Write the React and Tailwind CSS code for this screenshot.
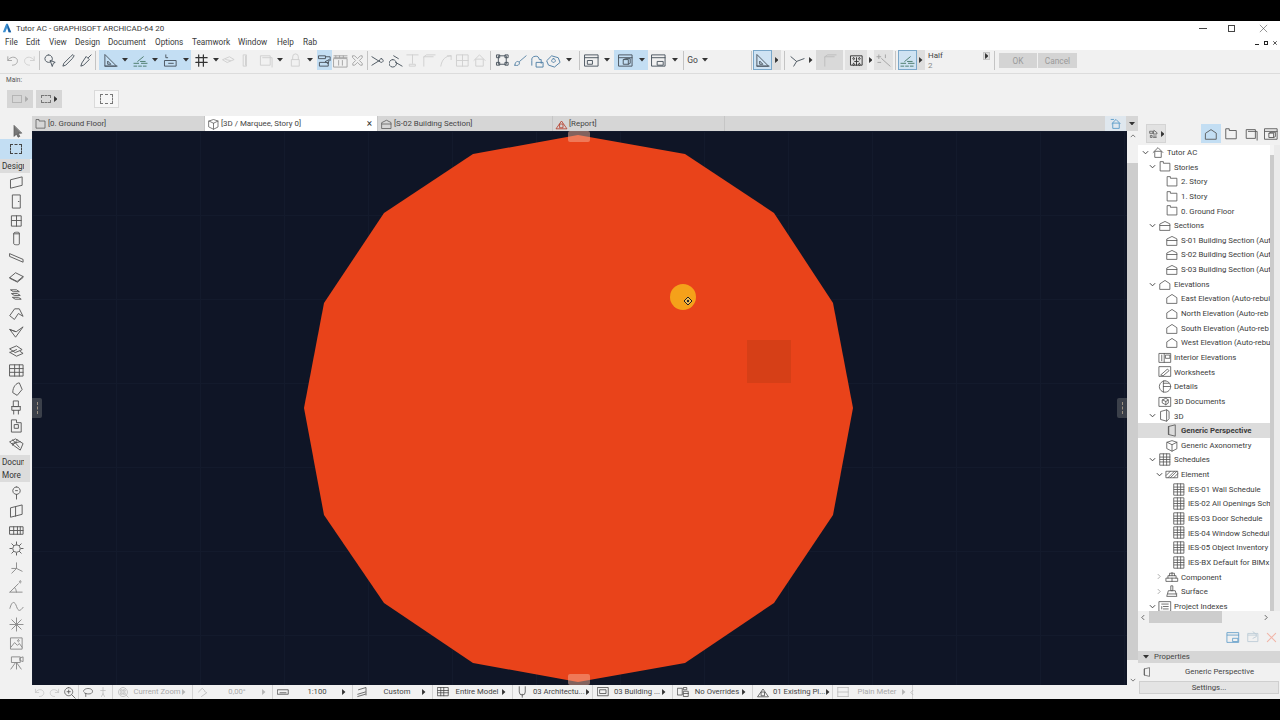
import React from "react";

const P = {
  undo: "M3 4v4h4M3 8c2-4 8-5 10-1 1 3-1 6-5 6",
  redo: "M13 4v4H9M13 8c-2-4-8-5-10-1-1 3 1 6 5 6",
  pick: "M6 2a4 4 0 1 0 .01 0M8 8l5 2-2 1-1 3z",
  drop: "M13 2l1 1-2 3-7 7-3 1 1-3 7-7z",
  syr: "M14 2l-3 3M9 4l3 3-6 6-3 1 1-3z",
  tri: "M2 2v12h12zM5 9v3h3zM2 14h13",
  snap: "M1 11h5M9 11h6M1 14h3M6 14h3M11 14h3M5 9l6-5M8 9h5",
  loc: "M3 2v3h2M2 8h12v6H2zM6 11h5",
  grid: "M5 2v12M10 2v12M2 5h12M2 10h12",
  ghost: "M2 7l7-3 5 3-7 3zM5 7l5 1",
  ghost2: "M6 2h3v12H6zM8 3v10",
  sq: "M3 3h10v10H3zM5 5h10v10",
  lock: "M5 7V4a3 3 0 0 1 6 0v3M4 7h8v7H4z",
  link: "M2 3h7v3H2zM9 4h5v4M3 10h9v4H3zM9 9l4-2-1 4z",
  dim: "M1 3h14M1 5h14M3 3v2M7 3v2M11 3v2M1 6h14v9H1zM6 8v5M10 8v5",
  xx: "M3 3h2l3 3 3-3h2v2l-3 3 3 3v2h-2l-3-3-3 3H3v-2l3-3-3-3z",
  sci: "M1 4l8 5M1 13l8-5M11 6a2 2 0 1 0 .01 0",
  mag: "M4 7a4 4 0 1 0 .01 0M7 10l7 4M5 3l5 3",
  tee: "M2 2h12M8 2v9M5 12h6v2H5z",
  cor: "M3 14V4h10M3 4l3-2h9",
  cur: "M3 14C4 7 8 3 14 3M10 3h4v4",
  box: "M2 2h12v12H2zM2 8h12M8 2v12",
  home: "M2 8l6-6 6 6M4 7v7h8V7z",
  nodes: "M4 3h8v9H4zM2 2h3v3H2zM11 2h3v3h-3zM2 10h3v3H2zM11 10h3v3h-3z",
  brush: "M14 3L7 9M2 13c3 1 5 0 5-3L5 9c-2 0-3 2-3 4z",
  cloud: "M3 13V8a4 4 0 0 1 8-1h2v4M8 10h7v5H8z",
  gem: "M1 8l5-5 7 2 2 5-6 5-6-2zM8 6a2 2 0 1 0 .01 0",
  w1: "M1 2h14v12H1zM1 5h14M4 8h5v4H4z",
  w2: "M1 2h14v12H1zM1 5h14M6 7h5v5H6zM6 7l2-1h5v5l-2 1",
  w3: "M1 2h14v12H1zM1 5h14M7 9h6v4H7z",
  yy: "M1 4l6 5-3 5M7 9l8-3",
  mv: "M2 3h12v10H2zM5 5a1 1 0 1 0 .01 0M11 5a1 1 0 1 0 .01 0M5 11a1 1 0 1 0 .01 0M11 11a1 1 0 1 0 .01 0M8 5v8M6 9h4",
  wand: "M15 14L6 6M3 2v4M1 4h4M10 2v3M2 10h3",
  arrow: "M5 1v13l3-3 2 4 2-1-2-4h4z",
  wall: "M2 5l12-3v9L2 14z",
  door: "M4 1h8v14H4zM10 8h.6",
  win: "M3 3h10v11H3zM3 8h10M8 3v11",
  col: "M5 2c0-1 6-1 6 0v12c0 1-6 1-6 0zM5 3h6",
  beam: "M1 4l14 6v3L1 7z",
  slab: "M1 9l6-5 8 4-6 5zM1 9v1l8 4 6-5V8",
  stair: "M2 3h6l3 2H5zM3 7h6l3 2H6zM4 11h6l3 2H7z",
  roof: "M1 10l5-7h5l4 8-5-3-4 6z",
  shell: "M1 5l6 8L15 2 8 7zM1 5l6 2",
  lay: "M1 5l7-3 6 4-7 3zM1 9l7-3M1 9l7 4 7-3-3-2",
  curt: "M1 3h14v12H1zM1 7h14M1 11h14M6 3v12M11 3v12",
  morph: "M4 12C4 6 8 2 11 2l3 7-5 6z",
  chair: "M5 1h5v6H5zM3 7h9M3 7v4h9V7M5 11v4M10 11v4",
  zone: "M3 2h5v3h5v10H3zM6 7h4v4H6z",
  mesh: "M1 5l6-3 8 5-3 7-7-5zM4 3l7 8M9 3l-5 6M3 7l9-2",
  mark: "M8 2a4 4 0 1 0 .01 0M8 10v5M7 6h2",
  elev: "M2 4l12-3v10L2 14zM7 3v10",
  det: "M1 4h14v8H1zM1 8h14M5 4v8M9 4v8M12 4v8",
  sun: "M8 4a4 4 0 1 0 .01 0M1 8h2M13 8h2M3 3l2 2M11 11l2 2M13 3l-2 2M5 11l-2 2M8 1v2M8 13v2",
  ax: "M3 14l5-5V3M8 9l6 3M3 9l5 0",
  ang: "M1 14l9-9M1 14h13M8 14a8 8 0 0 0-2-5M12 2a1 1 0 1 0 .01 0",
  wave: "M1 11c2-8 5-8 7-2s4 5 7 1",
  star: "M8 1v14M1 8h14M3 3l10 10M13 3L3 13",
  pic: "M2 2h12v12H2zM2 12l4-5 3 3 2-2 3 4M10 4a1 1 0 1 0 .01 0",
  cam: "M3 2h9v6H3zM12 3l3-1v5l-3-1zM7 8l-5 7M8 8l5 7M8 8v7",
  story: "M2 13V2h4v2h8v9z",
  section: "M2 6l6-3 6 3v8H2zM2 8h12",
  elevh: "M2 7l6-4 6 4v7H2z",
  intel: "M1 3h14v11H1zM7 3v11M9 5h5v4H9zM4 5v7",
  sheet: "M1 2h14v12H1zM3 12l8-7 2 2-7 6z",
  dets: "M8 1a7 7 0 1 0 .01 0M6 1v14M6 8h9M6 4h7",
  docs: "M1 3h14v11H1zM5 6l4-2 3 2v4l-3 2-4-2zM9 8v4M5 6l4 2 3-2",
  d3: "M3 3l7-2 3 2v9l-3 3-7-2zM10 1v14",
  persp: "M4 3l8-2v14l-8-2zM4 3v10",
  axon: "M2 4l6-2 6 2v8l-6 3-6-3zM2 4l6 3 6-3M8 7v8",
  sched: "M2 1h12v14H2zM2 5h12M2 8h12M2 11h12M6 1v14M10 1v14",
  hat: "M1 4h14v8H1zM3 12l8-8M6 12l8-8M1 9l5-5M10 12l5-5",
  bricks: "M1 14h14v-4H1zM8 10v4M3 10V7h10v3M8 7V3M5 7V4h6v3",
  surf: "M7 1h2v6H7zM4 7h8l2 7H2zM3 11h11",
  index: "M1 2h14v12H1zM4 5h8M6 8h6M6 11h6M4 8v3",
  proj: "M3 8l5-5 5 5M4 8v6h8V8zM2 3h3",
  tabs: "M3 4h4v3H3zM9 3l4 3v2H8zM4 10h2v3H4zM8 11h4M8 13h4",
  winb: "M1 2h14v12H1zM1 5h14M8 9h6v4H8z",
  addv: "M2 3h12v10H2zM2 5h10M8 1l4 3v3l-4 2",
  close: "M2 2l12 12M14 2L2 14",
  ruler: "M1 5h14v6H1zM4 9h2M7 9h2M10 9h2",
  layer: "M1 11l10-3M1 14l10-3M2 5l10-3v10",
  model: "M1 2h14v11H1zM1 6h14M5 2v11M9 2v11M1 9h14",
  fork: "M3 1v7a4 4 0 0 0 8 0V1M7 11v4",
  secb: "M1 2h14v11H1zM4 5h8v5H4z",
  over: "M1 3h6v9H1zM9 2h4v3H9zM9 7h6v7H9zM9 10h6",
  reno: "M1 14l7-10 7 10zM6 8h4v5H6z",
  plain: "M1 2h14M1 14h14M1 8h14M1 2v12M15 2v12",
  gl: "M8 2a6 6 0 1 0 .01 0M5 5h2v2H5zM9 9h2v2H9zM9 5h2v2H9zM5 9h2v2H5zM12 12l3 3",
  zm: "M7 2a5 5 0 1 0 .01 0M7 5v4M5 7h4M11 11l4 4",
  lasso: "M2 7c0-5 12-5 12 0s-9 4-11 2M5 10v4",
  walk: "M8 2v2M5 6h6M8 5v5M6 14l2-4 2 4",
  ang2: "M2 8l5-5 3 3M6 14l7-5-3-2",
};

function I({ n, cls = "w-[15px] h-[15px] text-[#4a4a4a]", sw = 1, fill = "none" }) {
  return (
    <svg viewBox="0 0 16 16" className={cls + " shrink-0"} fill={fill} stroke="currentColor" strokeWidth={sw} strokeLinejoin="round" strokeLinecap="round">
      <path d={P[n]} />
    </svg>
  );
}

const Dn = () => (
  <svg viewBox="0 0 7 4" className="w-[6px] h-[3.5px] text-[#333] shrink-0" fill="currentColor"><path d="M0 0h7L3.5 4z" /></svg>
);
const Rt = ({ cls = "text-[#333]" }) => (
  <svg viewBox="0 0 4 7" className={"w-[3.5px] h-[6px] shrink-0 " + cls} fill="currentColor"><path d="M0 0l4 3.5L0 7z" /></svg>
);
const Sep = ({ w }) => (
  <div className={w + " h-[20px] flex justify-center items-center shrink-0"}><div className="w-px h-[19px] bg-[#c4c4c4]" /></div>
);
const C = ({ w, children, cls = "" }) => (
  <div className={w + " h-[20px] flex items-center justify-center shrink-0 " + cls}>{children}</div>
);
const faded = "w-[15px] h-[15px] text-[#cfcfcf]";
const mid = "w-[15px] h-[15px] text-[#a3a3a3]";
const dark = "w-[15px] h-[15px] text-[#4a545e]";

function Toolbar() {
  return (
    <div className="h-[24px] flex items-start bg-[#f1f1f1] border-b border-[#dcdcdc] pl-[4px]">
      <C w="w-[16px]"><I n="undo" cls={mid} /></C>
      <C w="w-[18px]"><I n="redo" cls={faded} /></C>
      <Sep w="w-[3px]" />
      <C w="w-[18px]"><I n="pick" cls={dark} /></C>
      <C w="w-[18px]"><I n="drop" cls={dark} /></C>
      <C w="w-[16px]"><I n="syr" cls={dark} /></C>
      <Sep w="w-[4px]" />
      <div className="w-[2px] shrink-0" />
      <div className="flex bg-[#c3def3] h-[20px]">
        <C w="w-[22px]"><I n="tri" cls={dark} /></C>
        <C w="w-[8px]"><Dn /></C>
        <C w="w-[22px]"><I n="snap" cls="w-[15px] h-[15px] text-[#4a7a6a]" /></C>
        <C w="w-[8px]"><Dn /></C>
        <C w="w-[22px]"><I n="loc" cls={dark} /></C>
        <C w="w-[10px]"><Dn /></C>
      </div>
      <C w="w-[20px]"><I n="grid" cls="w-[15px] h-[15px] text-[#333]" sw={1.3} /></C>
      <C w="w-[10px]"><Dn /></C>
      <C w="w-[15px]"><I n="ghost" cls={faded} /></C>
      <C w="w-[18px]"><I n="ghost2" cls={faded} /></C>
      <C w="w-[22px]"><I n="sq" cls={faded} /></C>
      <C w="w-[8px]"><Dn /></C>
      <C w="w-[22px]"><I n="lock" cls={faded} /></C>
      <C w="w-[8px]"><Dn /></C>
      <div className="w-[3px] shrink-0" />
      <C w="w-[15px]" cls="bg-[#c3def3]"><I n="link" cls={dark} /></C>
      <C w="w-[17px]"><I n="dim" cls={mid} /></C>
      <C w="w-[16px]"><I n="xx" cls={mid} /></C>
      <Sep w="w-[4px]" />
      <C w="w-[19px]"><I n="sci" cls={dark} /></C>
      <C w="w-[16px]"><I n="mag" cls={dark} /></C>
      <C w="w-[16px]"><I n="tee" cls={faded} /></C>
      <C w="w-[16px]"><I n="cor" cls={faded} /></C>
      <C w="w-[18px]"><I n="cur" cls={faded} /></C>
      <C w="w-[17px]"><I n="box" cls={faded} /></C>
      <C w="w-[16px]"><I n="home" cls={faded} /></C>
      <Sep w="w-[6px]" />
      <C w="w-[19px]"><I n="nodes" cls={dark} /></C>
      <C w="w-[16px]"><I n="brush" cls="w-[15px] h-[15px] text-[#5c86a8]" /></C>
      <C w="w-[16px]"><I n="cloud" cls="w-[15px] h-[15px] text-[#4f7fa5]" /></C>
      <C w="w-[18px]"><I n="gem" cls="w-[15px] h-[15px] text-[#4f7fa5]" /></C>
      <C w="w-[14px]"><Dn /></C>
      <Sep w="w-[6px]" />
      <C w="w-[18px]"><I n="w1" cls={dark} /></C>
      <C w="w-[14px]"><Dn /></C>
      <div className="flex bg-[#c3def3] h-[20px]">
        <C w="w-[22px]"><I n="w2" cls={dark} /></C>
        <C w="w-[12px]"><Dn /></C>
      </div>
      <C w="w-[20px]"><I n="w3" cls={dark} /></C>
      <C w="w-[14px]"><Dn /></C>
      <Sep w="w-[3px]" />
      <C w="w-[15px]"><span className="text-[8.5px] pt-px text-[#444]">Go</span></C>
      <C w="w-[10px]"><Dn /></C>
      <div className="w-[39px] shrink-0" />
      <Sep w="w-[4px]" />
      <C w="w-[19px]" cls="bg-[#cfe3f3] border border-[#7aa7c9]"><I n="tri" cls={dark} /></C>
      <C w="w-[9px]" cls="bg-[#dedede]"><Rt /></C>
      <Sep w="w-[6px]" />
      <C w="w-[20px]"><I n="yy" cls={dark} /></C>
      <C w="w-[8px]"><Rt /></C>
      <div className="w-px shrink-0" />
      <C w="w-[27px]" cls="bg-[#d9d9d9]"><I n="cor" cls="w-[15px] h-[15px] text-[#bdbdbd]" /></C>
      <div className="w-[2px] shrink-0" />
      <C w="w-[22px]" cls="bg-[#e2e2e2]"><I n="mv" cls="w-[15px] h-[15px] text-[#333]" /></C>
      <C w="w-[7px]"><Rt /></C>
      <C w="w-[19px]" cls="bg-[#e2e2e2]"><I n="wand" cls={mid} /></C>
      <Sep w="w-[5px]" />
      <C w="w-[19px]" cls="bg-[#cfe3f3] border border-[#7aa7c9]"><I n="snap" cls="w-[15px] h-[15px] text-[#4a7a6a]" /></C>
      <C w="w-[8px]" cls="bg-[#dedede]"><Rt /></C>
      <div className="w-[3px] shrink-0" />
      <div className="w-[55px] h-[22px] shrink-0 flex flex-col text-[8px] leading-[10px] pt-px">
        <span className="text-[#444]">Half</span>
        <span className="text-[#888]">2</span>
      </div>
      <C w="w-[7px]" cls="bg-[#dedede] !h-[8px] mt-[2px] border border-[#c6c6c6]"><Rt /></C>
      <Sep w="w-[8px]" />
      <div className="w-[1px] shrink-0" />
      <div className="w-[38px] h-[15px] mt-[3px] pt-px bg-[#d4d4d4] flex items-center justify-center text-[8.3px] text-[#9a9a9a] shrink-0">OK</div>
      <div className="w-[1px] shrink-0" />
      <div className="w-[39px] h-[15px] mt-[3px] pt-px bg-[#d4d4d4] flex items-center justify-center text-[8.3px] text-[#9a9a9a] shrink-0">Cancel</div>
    </div>
  );
}

function InfoBox() {
  return (
    <div className="h-[42px] bg-[#f1f1f1] pl-[6px] pt-[2px] relative">
      <div className="text-[6.5px] leading-[8px] text-[#555]">Main:</div>
      <div className="flex mt-[6px] items-start">
        <div className="w-[26px] h-[18px] ml-px bg-[#d6d6d6] flex items-center justify-center gap-[3px]">
          <div className="w-[10px] h-[8px] border border-[#b5b5b5]" /><Rt cls="text-[#aaa]" />
        </div>
        <div className="w-[26px] h-[18px] ml-[3px] bg-[#d6d6d6] flex items-center justify-center gap-[3px]">
          <div className="w-[10px] h-[8px] border border-dashed border-[#777]" /><Rt />
        </div>
        <div className="w-[25px] h-[18px] ml-[32px] bg-[#f7f7f7] border border-[#dadada] flex items-center justify-center">
          <div className="w-[13px] h-[10px] border border-dashed border-[#777]" />
        </div>
      </div>
    </div>
  );
}

const tools1 = ["wall", "door", "win", "col", "beam", "slab", "stair", "roof", "shell", "lay", "curt", "morph", "chair", "zone", "mesh"];
const tools2 = ["mark", "elev", "det", "sun", "ax", "ang", "wave", "star", "pic", "cam"];

const Label = ({ children, cls = "" }) => (
  <div className={"h-[13.5px] w-[30px] bg-[#dcdcdc] pl-[2px] text-[8.2px] leading-[14px] text-[#333] " + cls}>
    <div className="w-[22px] overflow-hidden whitespace-nowrap">{children}</div>
  </div>
);

function LeftBar() {
  return (
    <div className="w-[32px] bg-[#f1f1f1] flex flex-col shrink-0 items-stretch">
      <div className="h-[23px] flex items-end justify-center pb-[1px]">
        <I n="arrow" cls="w-[13px] h-[13px] text-[#555]" fill="#777" />
      </div>
      <div className="h-[20px] bg-[#c3def3] flex items-center justify-center">
        <div className="w-[12px] h-[10px] border border-dashed border-[#444]" />
      </div>
      <Label>Design</Label>
      <div className="h-[1px]" />
      {tools1.map((t) => (
        <div key={t} className="h-[18.7px] flex items-center justify-center"><I n={t} cls="w-[15px] h-[15px] text-[#5a5a5a]" /></div>
      ))}
      <Label cls="mt-[1px]">Document</Label>
      <Label>More</Label>
      <div className="h-[1px]" />
      {tools2.map((t, i) => (
        <div key={t} className="h-[18.9px] flex items-center justify-center"><I n={t} cls={i >= 4 ? "w-[15px] h-[15px] text-[#8a8a8a]" : "w-[15px] h-[15px] text-[#5a5a5a]"} /></div>
      ))}
    </div>
  );
}

function Tab({ icon, text, active, w, x, iconCls }) {
  return (
    <div className={w + " h-full flex items-center shrink-0 border-r border-[#c6c6c6] pl-[2px] " + (active ? "bg-white" : "")}>
      <I n={icon} cls={iconCls || "w-[13px] h-[12px] text-[#555]"} />
      <span className="text-[7.9px] pt-px ml-[1px] text-[#444] whitespace-nowrap flex-1">{text}</span>
      {x && <span className="text-[10px] text-[#333] mr-[5px] leading-none">×</span>}
    </div>
  );
}

function TabBar() {
  return (
    <div className="h-[15px] bg-[#d6d6d6] flex items-stretch">
      <Tab w="w-[173px]" icon="story" text="[0. Ground Floor]" />
      <Tab w="w-[173px]" icon="axon" text="[3D / Marquee, Story 0]" active x />
      <Tab w="w-[175px]" icon="section" text="[S-02 Building Section]" />
      <Tab w="w-[172px]" icon="reno" text="[Report]" iconCls="w-[13px] h-[12px] text-[#b3301c]" />
      <div className="flex-1" />
      <div className="w-[21px] bg-[#dfe7ee] flex items-center justify-center"><I n="proj" cls="w-[16px] h-[13px] text-[#4b93c4]" /></div>
      <div className="w-[12px] flex items-center justify-center"><Dn /></div>
    </div>
  );
}

function Canvas() {
  return (
    <div className="flex-1 relative bg-[#0f1526] overflow-hidden bg-[linear-gradient(#131a2c_1px,transparent_1px),linear-gradient(90deg,#131a2c_1px,transparent_1px)] bg-[size:84px_84px]">
      <svg viewBox="32 131 1095 554" className="absolute inset-0 w-full h-full">
        <polygon fill="#e9431a" points="578,135 685,154 774,213 833,303 853,408 833,515 774,603 685,663 578,682 473,663 384,603 324,515 304,408 324,303 384,213 473,154" />
        <rect x="747" y="340" width="44" height="43" fill="#d63f17" />
        <rect x="568" y="131" width="22" height="11" rx="2" fill="#f5b095" fillOpacity="0.5" />
        <rect x="568" y="674" width="22" height="11" rx="2" fill="#f5b095" fillOpacity="0.5" />
        <circle cx="683" cy="297" r="13" fill="#f5a11a" />
        <path d="M688 297l4 4-4 4-4-4z" fill="#f5c15a" stroke="#222" strokeWidth="1" />
        <circle cx="688" cy="301" r="1.2" fill="#222" />
      </svg>
      <div className="absolute left-0 top-[267px] w-[10px] h-[20px] bg-[#3b404a] rounded-r-[2px] flex items-center justify-center">
        <div className="h-[12px] border-l border-dashed border-[#9a8f80]" />
      </div>
      <div className="absolute right-0 top-[267px] w-[10px] h-[20px] bg-[#3b404a] rounded-l-[2px] flex items-center justify-center">
        <div className="h-[12px] border-l border-dashed border-[#9a8f80]" />
      </div>
    </div>
  );
}

function VScroll() {
  return (
    <div className="w-[11px] bg-[#f1f1f1] flex flex-col items-center shrink-0">
      <div className="h-[32px] w-full flex items-start justify-center pt-[3px]">
        <svg viewBox="0 0 8 5" className="w-[6px] h-[4px] text-[#555]" fill="none" stroke="currentColor"><path d="M1 4l3-3 3 3" /></svg>
      </div>
      <div className="flex-1 w-full bg-[#cdcdcd]" />
      <div className="h-[25px] w-full flex items-end justify-center pb-[3px]">
        <svg viewBox="0 0 8 5" className="w-[6px] h-[4px] text-[#555]" fill="none" stroke="currentColor"><path d="M1 1l3 3 3-3" /></svg>
      </div>
    </div>
  );
}

function Seg({ icon, text, dim }) {
  return (
    <div className="w-[80px] h-full flex items-center border-r border-[#d2d2d2] shrink-0">
      <div className="w-[20px] flex justify-center shrink-0">
        <I n={icon} cls={dim ? "w-[12px] h-[12px] text-[#b5b5b5]" : "w-[12px] h-[12px] text-[#444]"} />
      </div>
      <span className={"flex-1 text-center text-[7.7px] whitespace-nowrap " + (dim ? "text-[#a8a8a8]" : "text-[#444]")}>{text}</span>
      <div className="w-[11px] flex justify-start pl-[1px] shrink-0"><Rt cls={dim ? "text-[#b5b5b5]" : "text-[#333]"} /></div>
    </div>
  );
}

function StatusBar() {
  return (
    <div className="h-[14px] bg-[#f1f1f1] flex items-center">
      <div className="w-[47px] h-full flex items-center pl-[1px] gap-[2px] border-r border-[#d2d2d2] shrink-0">
        <I n="undo" cls="w-[13px] h-[13px] text-[#c6c6c6]" />
        <I n="redo" cls="w-[13px] h-[13px] text-[#c6c6c6]" />
        <I n="zm" cls="w-[13px] h-[13px] text-[#555]" />
      </div>
      <div className="w-[34px] h-full flex items-center pl-[3px] gap-[3px] border-r border-[#d2d2d2] shrink-0">
        <I n="lasso" cls="w-[12px] h-[12px] text-[#555]" />
        <I n="walk" cls="w-[12px] h-[12px] text-[#bbb]" />
      </div>
      <Seg icon="gl" text="Current Zoom" dim />
      <Seg icon="ang2" text="0,00°" dim />
      <Seg icon="ruler" text="1:100" />
      <Seg icon="layer" text="Custom" />
      <Seg icon="model" text="Entire Model" />
      <Seg icon="fork" text="03 Architectu..." />
      <Seg icon="secb" text="03 Building ..." />
      <Seg icon="over" text="No Overrides" />
      <Seg icon="reno" text="01 Existing Pl..." />
      <Seg icon="plain" text="Plain Meter" dim />
      <svg viewBox="0 0 5 8" className="w-[4px] h-[7px] ml-[-3px] text-[#b5b5b5]" fill="none" stroke="currentColor"><path d="M4 1L1 4l3 3" /></svg>
    </div>
  );
}

const LV = { 0: "pl-[2px]", 1: "pl-[9px]", 2: "pl-[16px]", 3: "pl-[23px]" };

const rows = [
  [0, "home", "Tutor AC", "o"],
  [1, "story", "Stories", "o"],
  [2, "story", "2. Story"],
  [2, "story", "1. Story"],
  [2, "story", "0. Ground Floor"],
  [1, "section", "Sections", "o"],
  [2, "section", "S-01 Building Section (Aut"],
  [2, "section", "S-02 Building Section (Aut"],
  [2, "section", "S-03 Building Section (Aut"],
  [1, "elevh", "Elevations", "o"],
  [2, "elevh", "East Elevation (Auto-rebui"],
  [2, "elevh", "North Elevation (Auto-reb"],
  [2, "elevh", "South Elevation (Auto-reb"],
  [2, "elevh", "West Elevation (Auto-rebu"],
  [1, "intel", "Interior Elevations"],
  [1, "sheet", "Worksheets"],
  [1, "dets", "Details"],
  [1, "docs", "3D Documents"],
  [1, "d3", "3D", "o"],
  [2, "persp", "Generic Perspective", null, true],
  [2, "axon", "Generic Axonometry"],
  [1, "sched", "Schedules", "o"],
  [2, "hat", "Element", "o"],
  [3, "sched", "IES-01 Wall Schedule"],
  [3, "sched", "IES-02 All Openings Sch"],
  [3, "sched", "IES-03 Door Schedule"],
  [3, "sched", "IES-04 Window Schedul"],
  [3, "sched", "IES-05 Object Inventory"],
  [3, "sched", "IES-BX Default for BIMx"],
  [2, "bricks", "Component", "c"],
  [2, "surf", "Surface", "c"],
  [1, "index", "Project Indexes", "o"],
];

function Row({ r }) {
  const [lv, icon, text, st, sel] = r;
  return (
    <div className={"h-[14.65px] shrink-0 flex items-center overflow-hidden whitespace-nowrap " + LV[lv] + (sel ? " bg-[#dcdcdc]" : "")}>
      <div className="w-[10px] flex justify-center shrink-0">
        {st === "o" && <svg viewBox="0 0 8 5" className="w-[7px] h-[5px] text-[#444]" fill="none" stroke="currentColor" strokeWidth="1.1"><path d="M1 1l3 3 3-3" /></svg>}
        {st === "c" && <svg viewBox="0 0 5 8" className="w-[4px] h-[7px] text-[#999]" fill="none" stroke="currentColor"><path d="M1 1l3 3-3 3" /></svg>}
      </div>
      <div className="w-[16px] flex justify-center shrink-0"><I n={icon} cls="w-[14px] h-[13px] text-[#555]" /></div>
      <span className={"ml-[1px] pt-px text-[7.8px] text-[#3c3c3c] " + (sel ? "font-bold" : "")}>{text}</span>
    </div>
  );
}

function RightPanel() {
  return (
    <div className="w-[142px] shrink-0 flex flex-col bg-[#f1f1f1]">
      <div className="h-[29px] flex items-end pb-[2px] relative">
        <div className="w-[20px] h-[19px] ml-[8px] bg-[#e2e2e2] border border-[#d4d4d4] flex items-center justify-center gap-[2px]">
          <I n="tabs" cls="w-[11px] h-[12px] text-[#444]" /><Rt />
        </div>
        <div className="w-[20px] h-[19px] ml-[35px] bg-[#c3def3] flex items-center justify-center"><I n="elevh" cls="w-[14px] h-[14px] text-[#555]" /></div>
        <div className="w-[20px] h-[19px] flex items-center justify-center"><I n="story" cls="w-[14px] h-[14px] text-[#555]" /></div>
        <div className="w-[20px] h-[19px] flex items-center justify-center"><I n="sq" cls="w-[14px] h-[14px] text-[#555]" /></div>
        <div className="w-[19px] h-[19px] flex items-center justify-center"><I n="w2" cls="w-[14px] h-[14px] text-[#555]" /></div>
      </div>
      <div className="flex h-[466px]">
        <div className="w-[132px] bg-white overflow-hidden flex flex-col shrink-0">
          {rows.map((r) => <Row key={r[2]} r={r} />)}
        </div>
        <div className="flex-1 flex">
          <div className="w-[4px] flex flex-col">
            <div className="h-[10px] bg-[#f4f4f4]" />
            <div className="flex-1 bg-[#cbcbcb]" />
          </div>
          <div className="flex-1 bg-[#ebebeb]" />
        </div>
      </div>
      <div className="h-[12px] w-[132px] bg-[#f1f1f1] flex items-center pl-[3px]">
        <svg viewBox="0 0 5 8" className="w-[4px] h-[7px] text-[#444]" fill="none" stroke="currentColor"><path d="M4 1L1 4l3 3" /></svg>
        <div className="w-[73px] h-full bg-[#cdcdcd] ml-[4px]" />
        <svg viewBox="0 0 5 8" className="w-[4px] h-[7px] text-[#444] ml-[42px]" fill="none" stroke="currentColor"><path d="M1 1l3 3-3 3" /></svg>
      </div>
      <div className="h-[28px] flex items-center justify-end gap-[6px] pr-[3px]">
        <I n="winb" cls="w-[14px] h-[13px] text-[#5b9ac7]" />
        <I n="addv" cls="w-[14px] h-[13px] text-[#b9c9d4]" />
        <I n="close" cls="w-[11px] h-[11px] text-[#f1b5a8]" sw={1.5} />
      </div>
      <div className="h-[12px] bg-[#d6d6d6] flex items-center pl-[5px] gap-[5px]">
        <Dn /><span className="text-[7.8px] text-[#444]">Properties</span>
      </div>
      <div className="h-[18px] flex items-center pl-[4px]">
        <I n="persp" cls="w-[10px] h-[10px] text-[#444]" />
        <span className="text-[7.8px] text-[#444] ml-[33px]">Generic Perspective</span>
      </div>
      <div className="h-[13px] mx-px bg-[#e4e4e4] border border-[#cfcfcf] text-center text-[7.8px] leading-[11px] text-[#444]">Settings...</div>
    </div>
  );
}

const menu = [
  ["File", "w-[21px]"], ["Edit", "w-[23px]"], ["View", "w-[26px]"], ["Design", "w-[33px]"],
  ["Document", "w-[47px]"], ["Options", "w-[37px]"], ["Teamwork", "w-[46px]"], ["Window", "w-[39px]"],
  ["Help", "w-[26px]"], ["Rab", "w-[24px]"],
];

export default function App() {
  return (
    <div className="w-[1280px] h-[720px] bg-black flex flex-col overflow-hidden font-['Roboto','Noto_Sans',sans-serif]">
      <div className="h-[21px] shrink-0" />
      <div className="h-[678px] flex flex-col bg-[#f1f1f1]">
        <div className="h-[14px] bg-white flex items-center shrink-0">
          <svg viewBox="0 0 12 12" className="w-[10px] h-[10px] ml-[2px]">
            <path d="M1 11L5 1h2l4 10H8L6 6 4 11z" fill="#3c8fd0" />
            <path d="M6 1l5 10H8z" fill="#1c5a9a" />
          </svg>
          <span className="ml-[4px] text-[8px] pt-px text-[#3a3a3a] whitespace-nowrap">Tutor AC - GRAPHISOFT ARCHICAD-64 20</span>
          <div className="flex-1" />
          <div className="flex items-center">
            <div className="w-[8px] h-px bg-[#444]" />
            <div className="w-[7px] h-[7px] ml-[21px] border border-[#444]" />
            <I n="close" cls="w-[9px] h-[9px] text-[#444] ml-[24px]" />
            <div className="w-[12px]" />
          </div>
        </div>
        <div className="h-[15px] bg-white flex items-center pl-[5px] shrink-0">
          {menu.map(([t, w]) => <span key={t} className={w + " text-[8.2px] text-[#3a3a3a] whitespace-nowrap"}>{t}</span>)}
          <div className="flex-1" />
          <div className="flex items-center gap-[5px] pr-[3px]">
            <div className="w-[4px] h-[1.5px] bg-[#222] mt-[4px]" />
            <div className="w-[4px] h-[4px] border border-[#222]" />
            <I n="close" cls="w-[4px] h-[4px] text-[#222]" sw={3} />
          </div>
        </div>
        <Toolbar />
        <InfoBox />
        <div className="flex-1 flex min-h-0">
          <LeftBar />
          <div className="w-[1106px] shrink-0 flex flex-col">
            <TabBar />
            <div className="flex-1 flex min-h-0">
              <Canvas />
              <VScroll />
            </div>
            <StatusBar />
          </div>
          <RightPanel />
        </div>
      </div>
      <div className="flex-1" />
    </div>
  );
}
